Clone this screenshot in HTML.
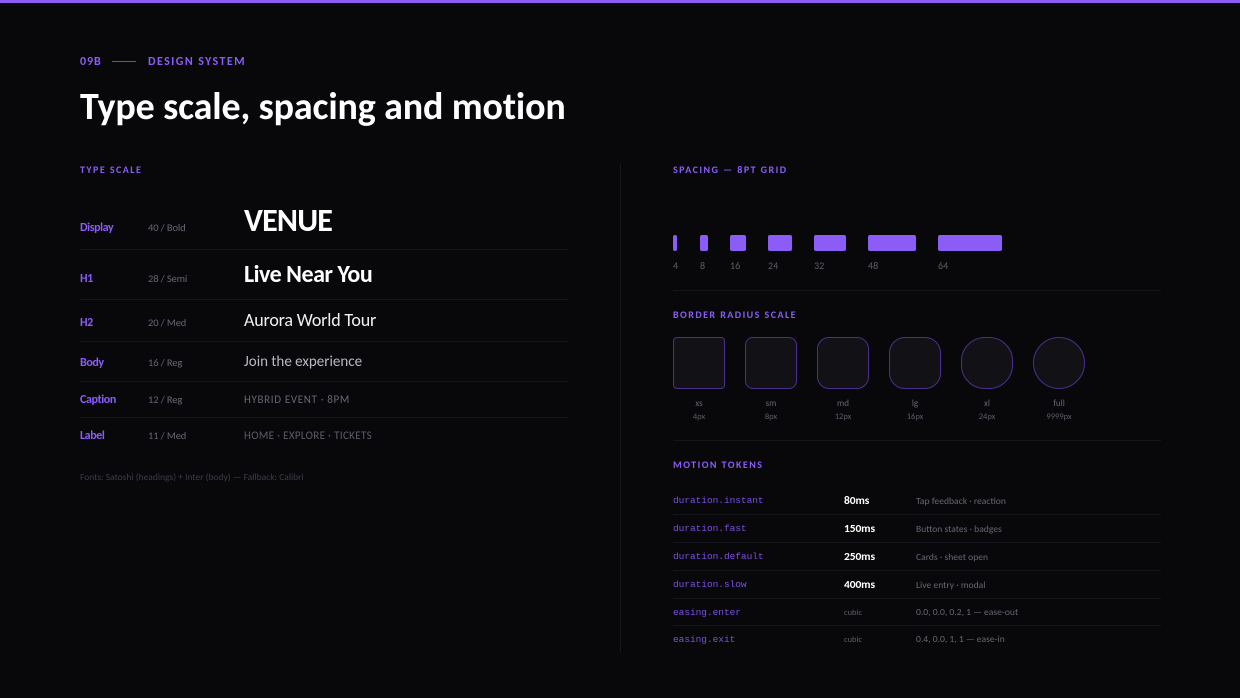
<!DOCTYPE html>
<html><head><meta charset="utf-8">
<style>
*{margin:0;padding:0;box-sizing:border-box}
html,body{width:1240px;height:698px;overflow:hidden;background:#08080b}
body{position:relative;font-family:"Carlito","Calibri","Liberation Sans",sans-serif;color:#fff}
.t{position:absolute;white-space:nowrap;line-height:16px}
.b{position:absolute}
.sec{font-size:10px;font-weight:700;letter-spacing:1.45px;color:#8b5cf6}
.hr{position:absolute;height:1px;background:#14141a}
.lab{left:80px;font-size:12px;font-weight:700;letter-spacing:-.4px;color:#8b5cf6}
.meta{left:148px;font-size:10.5px;letter-spacing:-.12px;color:#666674}
.ex{left:244px}
.sp{position:absolute;top:235px;height:16px;background:#8b5cf6;border-radius:2px}
.spl{top:258px;font-size:10px;color:#5c5c68}
.rb{position:absolute;top:337px;width:52px;height:52px;background:#111116;border:1px solid #4c2f8f}
.rl{top:396px;font-size:9px;color:#666674;width:52px;text-align:center}
.rv{top:409px;font-size:8.5px;color:#5c5c68;width:52px;text-align:center}
.tok{left:673px;font-family:"Liberation Mono",monospace;font-size:9.5px;letter-spacing:-.04px;color:#7c4fe0}
.val{left:844px;font-size:11.5px;font-weight:700;letter-spacing:-.1px;color:#fff}
.cub{left:844px;font-size:8.5px;color:#5c5c68}
.desc{left:916px;font-size:9.6px;color:#666674}
</style></head><body>
<div class="b" style="left:0;top:0;width:1240px;height:3px;background:#8b5cf6"></div>

<div class="t" style="left:80px;top:54px;font-size:12px;font-weight:700;letter-spacing:.9px;color:#8b5cf6">09B</div>
<div class="b" style="left:112px;top:61px;width:24px;height:1px;background:#6d45d0"></div>
<div class="t" style="left:148px;top:54px;font-size:12px;font-weight:700;letter-spacing:1.4px;color:#8b5cf6">DESIGN SYSTEM</div>
<div class="t" style="left:80px;top:85px;line-height:44px;font-size:38px;font-weight:700;letter-spacing:-.13px">Type scale, spacing and motion</div>

<div class="t sec" style="left:80px;top:162px">TYPE SCALE</div>

<div class="t lab" style="top:219.5px">Display</div>
<div class="t meta" style="top:220px">40 / Bold</div>
<div class="t ex" style="top:201px;line-height:40px;font-size:32px;font-weight:700;letter-spacing:-.8px">VENUE</div>
<div class="hr" style="left:80px;top:249px;width:488px"></div>

<div class="t lab" style="top:270.5px">H1</div>
<div class="t meta" style="top:271px">28 / Semi</div>
<div class="t ex" style="top:259px;line-height:32px;font-size:24px;font-weight:700;letter-spacing:-.5px">Live Near You</div>
<div class="hr" style="left:80px;top:299px;width:488px"></div>

<div class="t lab" style="top:314.5px">H2</div>
<div class="t meta" style="top:315px">20 / Med</div>
<div class="t ex" style="top:308px;line-height:24px;font-size:18px;letter-spacing:-.17px;color:#f0f0f5">Aurora World Tour</div>
<div class="hr" style="left:80px;top:341px;width:488px"></div>

<div class="t lab" style="top:354.5px">Body</div>
<div class="t meta" style="top:355px">16 / Reg</div>
<div class="t ex" style="top:352px;line-height:20px;font-size:15px;color:#b8b8c4">Join the experience</div>
<div class="hr" style="left:80px;top:381px;width:488px"></div>

<div class="t lab" style="top:391.5px">Caption</div>
<div class="t meta" style="top:392px">12 / Reg</div>
<div class="t ex" style="top:392px;font-size:11px;letter-spacing:.66px;color:#666674">HYBRID EVENT · 8PM</div>
<div class="hr" style="left:80px;top:417px;width:488px"></div>

<div class="t lab" style="top:427.5px">Label</div>
<div class="t meta" style="top:428px">11 / Med</div>
<div class="t ex" style="top:428px;font-size:11px;letter-spacing:.35px;color:#5c5c68">HOME · EXPLORE · TICKETS</div>

<div class="t" style="left:80px;top:469px;font-size:9.5px;color:#3c3c48">Fonts: Satoshi (headings) + Inter (body) — Fallback: Calibri</div>

<div class="b" style="left:620px;top:164px;width:1px;height:488px;background:#17171d"></div>

<div class="t sec" style="left:673px;top:162px">SPACING — 8PT GRID</div>
<div class="sp" style="left:673px;width:4px"></div>
<div class="sp" style="left:700px;width:8px"></div>
<div class="sp" style="left:730px;width:16px"></div>
<div class="sp" style="left:768px;width:24px"></div>
<div class="sp" style="left:814px;width:32px"></div>
<div class="sp" style="left:868px;width:48px"></div>
<div class="sp" style="left:938px;width:64px"></div>
<div class="t spl" style="left:673px">4</div>
<div class="t spl" style="left:700px">8</div>
<div class="t spl" style="left:730px">16</div>
<div class="t spl" style="left:768px">24</div>
<div class="t spl" style="left:814px">32</div>
<div class="t spl" style="left:868px">48</div>
<div class="t spl" style="left:938px">64</div>
<div class="hr" style="left:673px;top:290px;width:488px"></div>

<div class="t sec" style="left:673px;top:307px">BORDER RADIUS SCALE</div>
<div class="rb" style="left:673px;border-radius:4px"></div>
<div class="rb" style="left:745px;border-radius:8px"></div>
<div class="rb" style="left:817px;border-radius:12px"></div>
<div class="rb" style="left:889px;border-radius:16px"></div>
<div class="rb" style="left:961px;border-radius:24px"></div>
<div class="rb" style="left:1033px;border-radius:50%"></div>
<div class="t rl" style="left:673px">xs</div><div class="t rv" style="left:673px">4px</div>
<div class="t rl" style="left:745px">sm</div><div class="t rv" style="left:745px">8px</div>
<div class="t rl" style="left:817px">md</div><div class="t rv" style="left:817px">12px</div>
<div class="t rl" style="left:889px">lg</div><div class="t rv" style="left:889px">16px</div>
<div class="t rl" style="left:961px">xl</div><div class="t rv" style="left:961px">24px</div>
<div class="t rl" style="left:1033px">full</div><div class="t rv" style="left:1033px">9999px</div>
<div class="hr" style="left:673px;top:440px;width:488px"></div>

<div class="t sec" style="left:673px;top:457px">MOTION TOKENS</div>

<div class="t tok" style="top:493px">duration.instant</div>
<div class="t val" style="top:492.5px">80ms</div>
<div class="t desc" style="top:493px">Tap feedback · reaction</div>
<div class="hr" style="left:673px;top:514px;width:488px"></div>

<div class="t tok" style="top:521px">duration.fast</div>
<div class="t val" style="top:520.5px">150ms</div>
<div class="t desc" style="top:521px">Button states · badges</div>
<div class="hr" style="left:673px;top:542px;width:488px"></div>

<div class="t tok" style="top:549px">duration.default</div>
<div class="t val" style="top:548.5px">250ms</div>
<div class="t desc" style="top:549px">Cards · sheet open</div>
<div class="hr" style="left:673px;top:570px;width:488px"></div>

<div class="t tok" style="top:577px">duration.slow</div>
<div class="t val" style="top:576.5px">400ms</div>
<div class="t desc" style="top:577px">Live entry · modal</div>
<div class="hr" style="left:673px;top:598px;width:488px"></div>

<div class="t tok" style="top:605px">easing.enter</div>
<div class="t cub" style="top:604.5px">cubic</div>
<div class="t desc" style="top:604px">0.0, 0.0, 0.2, 1 — ease-out</div>
<div class="hr" style="left:673px;top:625px;width:488px"></div>

<div class="t tok" style="top:632px">easing.exit</div>
<div class="t cub" style="top:631.5px">cubic</div>
<div class="t desc" style="top:631px">0.4, 0.0, 1, 1 — ease-in</div>
</body></html>
